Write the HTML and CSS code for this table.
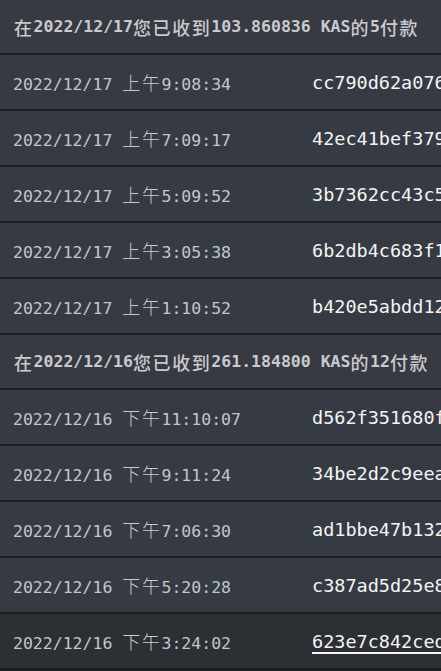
FILE: index.html
```html
<!DOCTYPE html>
<html lang="zh">
<head>
    <meta charset="UTF-8">
    <meta name="viewport" content="width=device-width, initial-scale=1.0">
    <title>KAS 付款</title>
    <link rel="stylesheet" href="styles.css">
</head>
<body>
    <div class="payments">
        <!-- 2022/12/17 -->
        <div class="day-header"><span class="zh">在</span>2022/12/17<span class="zh">您已收到</span>103.860836 KAS<span class="zh">的</span>5<span class="zh">付款</span></div>
        <div class="row">
            <div class="when">2022/12/17 <span class="zh">上午</span>9:08:34</div>
            <div class="hash">cc790d62a0763f9e1b2d4c58a7e0f31d9b6c2a4e8f05d71c3b9a6e2d4f8c1a07</div>
        </div>
        <div class="row">
            <div class="when">2022/12/17 <span class="zh">上午</span>7:09:17</div>
            <div class="hash">42ec41bef3791a6d0c2e8b54f7a39d1e6c0b28f4a7d3e9150c6b2a8f4d71e3b9</div>
        </div>
        <div class="row">
            <div class="when">2022/12/17 <span class="zh">上午</span>5:09:52</div>
            <div class="hash">3b7362cc43c5a9e10d4f7b28c6e3a15d9f0b72e4c8a16d3f5b09e2c7a4d81f60</div>
        </div>
        <div class="row">
            <div class="when">2022/12/17 <span class="zh">上午</span>3:05:38</div>
            <div class="hash">6b2db4c683f1e07a9d5c3b2e8f1a46d0c7e93b5a2f8d14c6e0b79a3d5f2c8e14</div>
        </div>
        <div class="row">
            <div class="when">2022/12/17 <span class="zh">上午</span>1:10:52</div>
            <div class="hash">b420e5abdd12c7f93e0a6d4b8c15e2f7a9d03b6c4e81f5a2d7c90b3e6f4a1d58</div>
        </div>

        <!-- 2022/12/16 -->
        <div class="day-header"><span class="zh">在</span>2022/12/16<span class="zh">您已收到</span>261.184800 KAS<span class="zh">的</span>12<span class="zh">付款</span></div>
        <div class="row">
            <div class="when">2022/12/16 <span class="zh">下午</span>11:10:07</div>
            <div class="hash">d562f351680f4a9c2e7b0d3f6a18c5e9b2d47f0a3c6e81b5d9f2a4c7e0b36d18</div>
        </div>
        <div class="row">
            <div class="when">2022/12/16 <span class="zh">下午</span>9:11:24</div>
            <div class="hash">34be2d2c9eea71f0b5d3a8c6e4f29b1d7a05c3e8f6b42d9a1c7e0f5b3d86a24c</div>
        </div>
        <div class="row">
            <div class="when">2022/12/16 <span class="zh">下午</span>7:06:30</div>
            <div class="hash">ad1bbe47b1320f8c6e5a9d3b7f2e14c0a6d8b5f3e9c27a1d4b60f8e3c5a92d7b</div>
        </div>
        <div class="row">
            <div class="when">2022/12/16 <span class="zh">下午</span>5:20:28</div>
            <div class="hash">c387ad5d25e86b1f0a4c9e2d7b35f8a1c6e04d9b2f7a3e5c18d6b0f4a2e9c73d</div>
        </div>
        <div class="row active">
            <div class="when">2022/12/16 <span class="zh">下午</span>3:24:02</div>
            <div class="hash">623e7c842ced9a1b5f0e3c7d2a8b64f1e9c05d3a7b2f8e4c16d9a0b5e3f7c28a</div>
        </div>
    </div>
</body>
</html>
```

FILE: styles.css
```css
body {
    margin: 0;
    padding: 0;
    background-color: #1b1d21;
    font-family: "DejaVu Sans Mono", "Noto Sans CJK SC", monospace;
    overflow: hidden;
}
.payments {
    display: flex;
    flex-direction: column;
}
.zh {
    font-family: "Noto Sans CJK SC", sans-serif;
    font-size: 18px;
    letter-spacing: 1.6px;
}
.day-header {
    height: 53px;
    display: flex;
    align-items: center;
    padding-left: 14px;
    background-color: #373a42;
    border-bottom: 2px solid #1b1d21;
    color: #c9cacc;
    font-size: 16.5px;
    font-weight: bold;
    white-space: nowrap;
}
.day-header .zh {
    font-weight: 500;
}
.row {
    height: 54px;
    display: flex;
    align-items: center;
    background-color: #363a42;
    border-bottom: 2px solid #1b1d21;
    white-space: nowrap;
    overflow: hidden;
}
.when {
    flex: 0 0 299px;
    padding-left: 13px;
    color: #c3c6ca;
    font-size: 16.5px;
}
.when .zh {
    color: #c8cacd;
    font-weight: 300;
}
.hash {
    color: #f4f4f4;
    font-size: 18.5px;
    line-height: 30px;
    padding-top: 2px;
    overflow: hidden;
}
.row.active {
    background-color: #2c2f34;
}
.row.active .hash {
    text-decoration: underline;
    text-decoration-thickness: 2px;
    text-underline-offset: 4px;
}
```
